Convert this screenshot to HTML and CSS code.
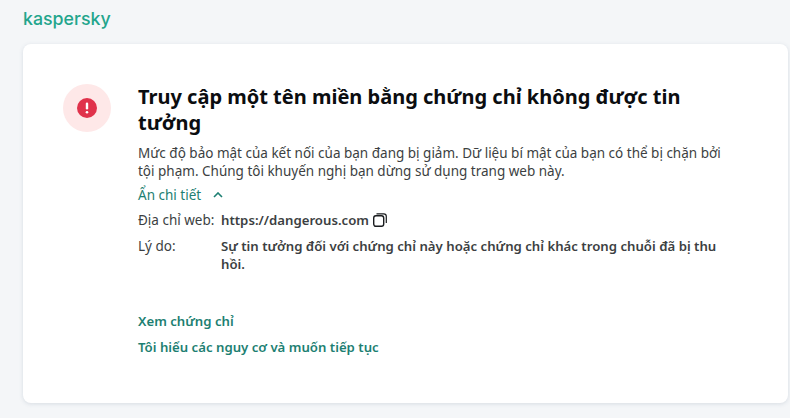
FILE: index.html
```html
<!DOCTYPE html>
<html lang="vi">
<head>
    <meta charset="UTF-8">
    <meta name="viewport" content="width=device-width, initial-scale=1.0">
    <title>Kaspersky</title>
    <link rel="stylesheet" href="styles.css">
</head>
<body>
    <header class="page-header">
        <span class="logo">kaspersky</span>
    </header>

    <main class="card">
        <div class="status-icon">
            <svg width="20" height="20" viewBox="0 0 20 20">
                <circle cx="10" cy="10" r="10" fill="#e0324b"/>
                <rect x="8.8" y="4.5" width="2.4" height="7" rx="1.2" fill="#fff"/>
                <circle cx="10" cy="14.2" r="1.3" fill="#fff"/>
            </svg>
        </div>

        <div class="content">
            <h1 class="title">Truy cập một tên miền bằng chứng chỉ không được tin tưởng</h1>
            <p class="description">Mức độ bảo mật của kết nối của bạn đang bị giảm. Dữ liệu bí mật của bạn có thể bị chặn bởi tội phạm. Chúng tôi khuyến nghị bạn dừng sử dụng trang web này.</p>

            <div class="toggle">
                <span>Ẩn chi tiết</span>
                <svg width="10" height="6" viewBox="0 0 10 6">
                    <path d="M1 5l4-4 4 4" fill="none" stroke="#1d7f72" stroke-width="1.6"/>
                </svg>
            </div>

            <div class="details">
                <div class="detail-label">Địa chỉ web:</div>
                <div class="detail-value">
                    https://dangerous.com
                    <svg class="copy-icon" width="14" height="14" viewBox="0 0 14 14">
                        <rect x="0.7" y="2.7" width="10" height="10.6" rx="2.2" fill="none" stroke="#1a1c1f" stroke-width="1.4"/>
                        <path d="M3.5 0.8h7.2A2.6 2.6 0 0 1 13.3 3.4V10" fill="none" stroke="#1a1c1f" stroke-width="1.2"/>
                    </svg>
                </div>
                <div class="detail-label">Lý do:</div>
                <div class="detail-value">Sự tin tưởng đối với chứng chỉ này hoặc chứng chỉ khác trong chuỗi đã bị thu hồi.</div>
            </div>

            <div class="actions">
                <a class="action-link" href="#">Xem chứng chỉ</a>
                <a class="action-link" href="#">Tôi hiểu các nguy cơ và muốn tiếp tục</a>
            </div>
        </div>
    </main>
</body>
</html>
```

FILE: styles.css
```css
:root {
    --link-color: #1d7f72;
    --text-color: #3c3f42;
    --page-bg: #f4f6f8;
}

html, body {
    height: 100%;
}

body {
    font-family: "Noto Sans", "Open Sans", sans-serif;
    font-size: 13.5px;
    line-height: 18px;
    color: var(--text-color);
    margin: 0;
    padding: 0 2px 15px 23px;
    box-sizing: border-box;
    overflow: hidden;
    background-color: var(--page-bg);
}

.page-header {
    height: 44px;
    box-sizing: border-box;
    padding-top: 6px;
}

.logo {
    font-family: "Inter", sans-serif;
    font-size: 17.8px;
    line-height: 26px;
    font-weight: 500;
    color: #23a58c;
}

.card {
    display: flex;
    height: 359px;
    box-sizing: border-box;
    padding: 40px 60px 0 40px;
    background: white;
    border-radius: 8px;
    box-shadow: 0 1px 4px rgba(90,110,140,0.18);
}

.status-icon {
    flex: none;
    display: flex;
    align-items: center;
    justify-content: center;
    width: 48px;
    height: 48px;
    margin-right: 27px;
    border-radius: 50%;
    background-color: #fee8e8;
}

.content {
    flex: 1;
}

.title {
    margin: 0 0 8px;
    font-size: 20px;
    line-height: 26px;
    font-weight: 700;
    color: #0b0d10;
}

.description {
    margin: 0 0 6px;
}

.toggle {
    display: flex;
    align-items: center;
    gap: 12px;
    margin-bottom: 7px;
    color: var(--link-color);
}

.details {
    display: grid;
    grid-template-columns: 83px 1fr;
    row-gap: 8px;
}

.detail-value {
    font-size: 13.2px;
    font-weight: 600;
}

.copy-icon {
    vertical-align: -2px;
    margin-left: 1px;
}

.actions {
    display: flex;
    flex-direction: column;
    gap: 8px;
    margin-top: 39px;
}

.action-link {
    font-size: 13.2px;
    font-weight: 600;
    color: var(--link-color);
    text-decoration: none;
}
```
